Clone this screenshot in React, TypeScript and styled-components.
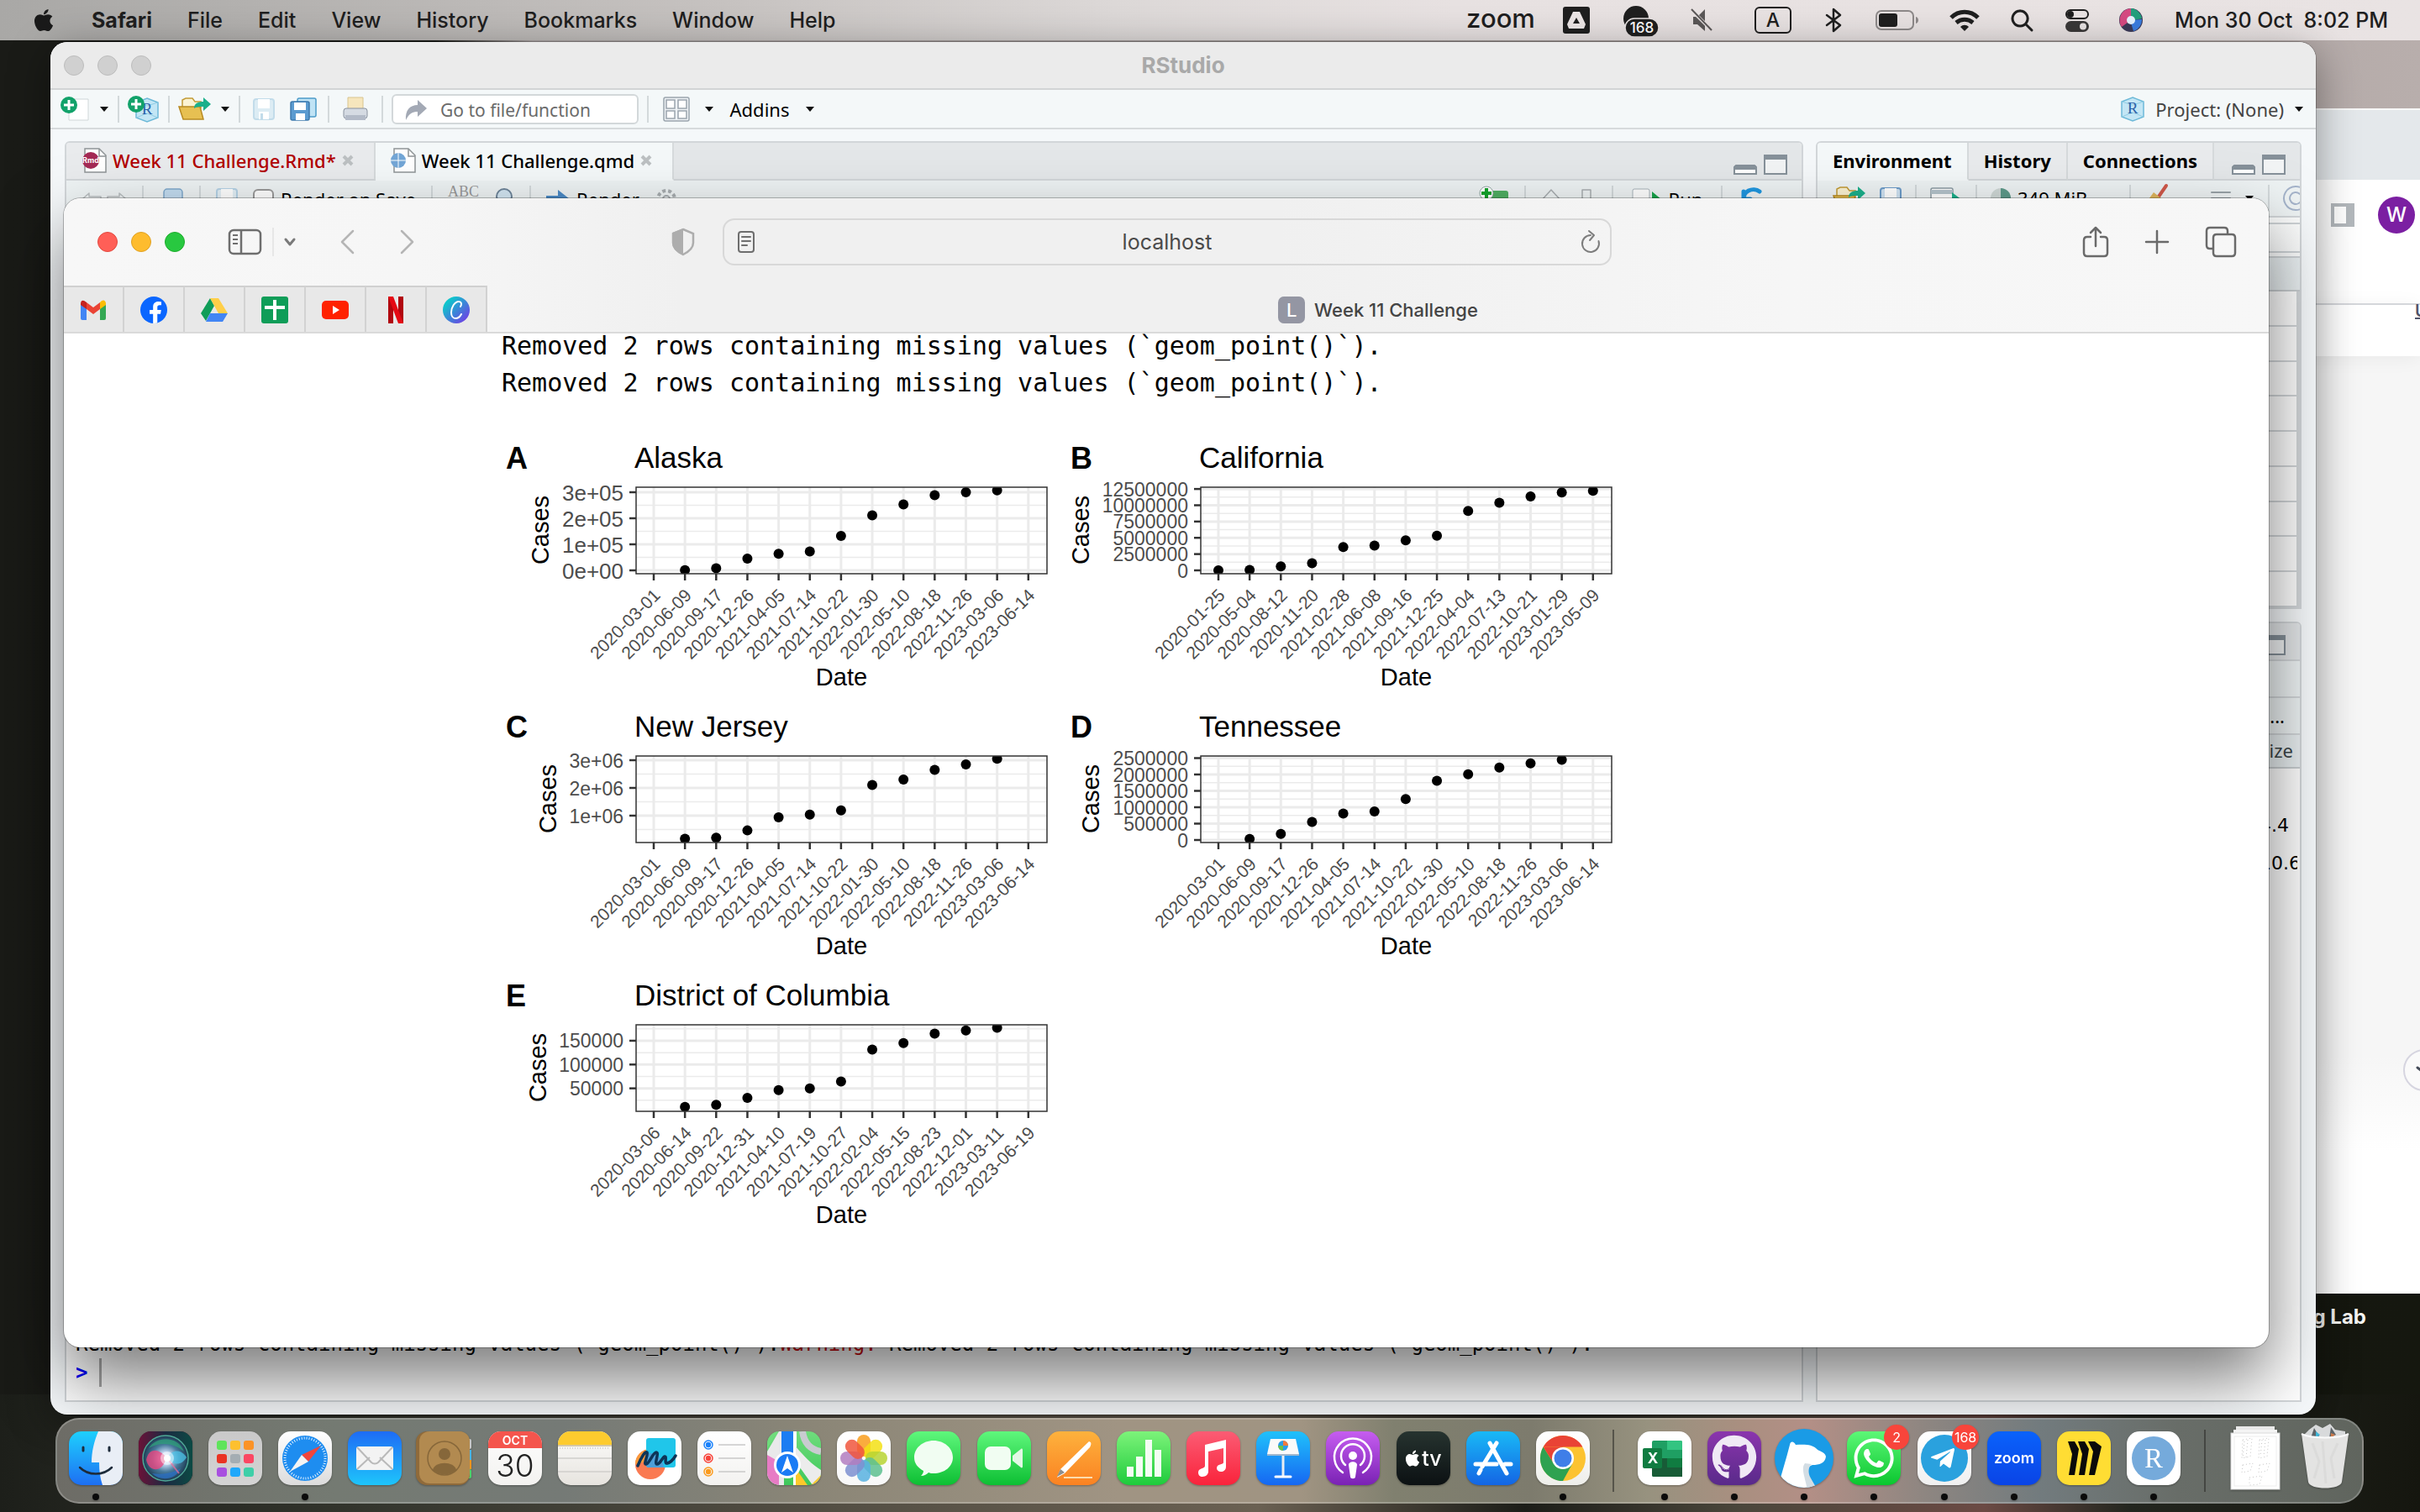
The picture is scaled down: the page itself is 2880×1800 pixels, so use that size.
import React from "react";
import styled, { createGlobalStyle, css } from "styled-components";
import {
  FaApple,
  FaFacebookF,
  FaGithub,
  FaTelegramPlane,
  FaWhatsapp,
} from "react-icons/fa";

const sans = `Inter, "Liberation Sans", sans-serif`;
const ide = `"Noto Sans", "DejaVu Sans", sans-serif`;
const mono = `"DejaVu Sans Mono", monospace`;
const plot = `"Liberation Sans", Arial, sans-serif`;

const GlobalStyle = createGlobalStyle`
  *, *::before, *::after { box-sizing: border-box; }
  body { margin: 0; background: #1a1b17; font-family: ${sans}; }
  button, input { font: inherit; color: inherit; border: 0; padding: 0; margin: 0; background: none; }
  svg { display: block; flex: none; overflow: visible; }
`;

const Desktop = styled.div`
  position: relative;
  display: flex;
  flex-direction: column;
  min-height: 100vh;
  overflow: hidden;
  background:
    linear-gradient(90deg, #1a1b17 18%, #a9a2a2 22%, #9e9694 60%, #b8aeac 100%) top / 100% 160px no-repeat,
    linear-gradient(90deg, #1d1f1a 0%, #33352d 15%, #544f44 35%, #6a6052 52%, #1c1d18 63%, #4b463b 72%, #6b4a44 82%, #23261f 88%, #15160f 100%) bottom / 100% 140px no-repeat,
    linear-gradient(90deg, #1a1b17, #15170f);
`;

/* ---------- Menu bar ---------- */

const MenuBar = styled.header`
  display: flex;
  align-items: center;
  justify-content: space-between;
  height: 48px;
  padding: 0 38px 0 37px;
  font-size: 25px;
  color: #1f1f1f;
  background: linear-gradient(90deg, #a9a8a6 0%, #c6c2c0 30%, #dcd8d7 46%, #e7e1e1 60%, #e9e3e3 100%);
`;

const Menus = styled.nav`
  display: flex;
  align-items: center;
  gap: 42px;
`;

const MenuButton = styled.button<{ $bold?: boolean }>`
  font-weight: ${(p) => (p.$bold ? 700 : 500)};
  white-space: nowrap;
`;

const StatusItems = styled.div`
  display: flex;
  align-items: center;
  gap: 34px;
`;

const Clock = styled.time`
  padding-left: 4px;
  font-weight: 500;
  white-space: pre;
`;

/* ---------- Windows ---------- */

const Stage = styled.main`
  position: relative;
  flex: 1;
`;

const windowFrame = css`
  position: absolute;
  display: flex;
  flex-direction: column;
  overflow: hidden;
`;

const ChromeWindow = styled.section`
  ${windowFrame}
  top: 81px;
  left: 50%;
  right: 0;
  bottom: 148px;
  background: linear-gradient(#f6f6f6 80%, #ffffff 88%);
`;

const ChromeTabs = styled.div`
  height: 85px;
  background: #e4e8eb;
  border-top: 2px solid #f8f8f8;
`;

const ChromeToolbar = styled.div`
  display: flex;
  align-items: center;
  justify-content: flex-end;
  gap: 28px;
  height: 149px;
  padding: 0 6px 64px 0;
  background: #fff;
  border-bottom: 2px solid #dadce0;
`;

const Avatar = styled.button`
  width: 44px;
  height: 44px;
  border-radius: 50%;
  background: #7b1fa2;
  color: #fff;
  font-size: 24px;
  font-weight: 500;
`;

const ChromeStrip = styled.div`
  display: flex;
  justify-content: flex-end;
  height: 61px;
  background: #fff;
  box-shadow: 0 2px 24px rgba(0, 0, 0, 0.06);
`;

const ClippedLink = styled.a`
  width: 6px;
  color: #50546a;
  font-size: 20px;
  line-height: 14px;
  font-weight: 600;
`;

const ScrollDown = styled.button`
  display: grid;
  place-items: center;
  position: absolute;
  right: -30px;
  bottom: 241px;
  width: 50px;
  height: 50px;
  border: 2px solid #d6d5e0;
  border-radius: 50%;
  background: #fafafa;
`;

const DesktopLabel = styled.span`
  position: absolute;
  right: 64px;
  bottom: 104px;
  color: #f4f4f2;
  font-size: 24px;
  line-height: 32px;
  font-weight: 700;
`;

const StudioWindow = styled.section`
  ${windowFrame}
  top: 2px;
  left: 60px;
  right: 124px;
  bottom: 4px;
  border-radius: 20px;
  background: #f5f8fa;
  box-shadow: 0 0 0 1px rgba(0, 0, 0, 0.2), 0 12px 50px rgba(0, 0, 0, 0.4);
  font-family: ${ide};
  font-size: 22px;
`;

const StudioTitle = styled.div`
  display: grid;
  grid-template-columns: 1fr auto 1fr;
  align-items: center;
  height: 57px;
  padding: 0 16px;
  background: #ebebeb;
  border-bottom: 2px solid #d2d4d5;
  color: #a9a9a9;
  font-family: ${sans};
  font-size: 26px;
  font-weight: 700;
`;

const Lights = styled.div`
  display: flex;
  gap: 16px;
`;

const Light = styled.button<{ $fill: string; $line: string }>`
  width: 24px;
  height: 24px;
  border-radius: 50%;
  background: ${(p) => p.$fill};
  border: 1px solid ${(p) => p.$line};
`;

const StudioToolbar = styled.div`
  display: flex;
  align-items: center;
  gap: 10px;
  height: 47px;
  padding: 0 14px 0 12px;
  background: #f4f8f9;
  border-bottom: 2px solid #d6dadc;
`;

const ToolButton = styled.button<{ $width?: number }>`
  display: flex;
  align-items: center;
  justify-content: center;
  gap: 8px;
  min-width: ${(p) => p.$width ?? 12}px;
  white-space: nowrap;
`;

const Divider = styled.span`
  flex: none;
  width: 2px;
  height: 32px;
  background: #d3d9db;
`;

const GoTo = styled.label`
  display: flex;
  align-items: center;
  gap: 16px;
  width: 294px;
  height: 36px;
  padding: 2px 14px 0;
  border: 2px solid #d3d8da;
  border-radius: 6px;
  background: #fff;
  input { width: 100%; outline: 0; font-size: 21px; line-height: 28px; }
  input::placeholder { color: #6b6b6b; opacity: 1; }
`;

const ProjectButton = styled.button`
  display: flex;
  align-items: center;
  gap: 12px;
  margin-left: auto;
  color: #444;
`;

const PaneGrid = styled.div`
  flex: 1;
  display: grid;
  grid-template-columns: minmax(0, 1fr) 578px;
  gap: 15px;
  padding: 14px 17px 15px;
`;

const PaneColumn = styled.div<{ $rows: string }>`
  display: grid;
  grid-template-rows: ${(p) => p.$rows};
  gap: 15px;
  min-width: 0;
`;

const Pane = styled.section`
  display: flex;
  flex-direction: column;
  min-width: 0;
  min-height: 0;
  overflow: hidden;
  border: 2px solid #d2d6d9;
  border-radius: 6px 6px 0 0;
  background: #fff;
`;

const TabStrip = styled.div`
  display: flex;
  height: 45px;
  background: #e4e7e9;
`;

const StudioTab = styled.button<{ $active?: boolean; $panel?: boolean; $color?: string }>`
  display: flex;
  align-items: center;
  gap: 7px;
  padding: ${(p) => (p.$panel ? "0 18px 2px" : "0 24px 2px 18px")};
  border-right: 2px solid #d6dadc;
  border-bottom: 2px solid ${(p) => (p.$active ? "#f4f8f9" : "#d2d6d9")};
  background: ${(p) => (p.$active ? "#f4f8f9" : "#e9ebed")};
  color: ${(p) => p.$color ?? "#000"};
  font-weight: ${(p) => (p.$panel ? 700 : 500)};
  white-space: nowrap;
`;

const StripEnd = styled.div`
  flex: 1;
  display: flex;
  align-items: flex-end;
  justify-content: flex-end;
  gap: 8px;
  padding: 0 17px 5px;
  border-bottom: 2px solid #d2d6d9;
`;

const PaneToolbar = styled.div<{ $height?: number; $flush?: boolean }>`
  display: flex;
  align-items: center;
  gap: ${(p) => (p.$flush ? 16 : 18)}px;
  flex: none;
  height: ${(p) => p.$height ?? 44}px;
  padding: 0 ${(p) => (p.$flush ? 0 : 18)}px 0 18px;
  border-bottom: 2px solid #d2d6d9;
  background: #eef3f4;
`;

const CheckLabel = styled.label`
  display: flex;
  align-items: center;
  gap: 8px;
  color: #000;
  input {
    appearance: none;
    width: 25px;
    height: 25px;
    border: 2px solid #9a9a9a;
    border-radius: 6px;
    background: #fff;
  }
`;

const Spacer = styled.span`
  flex: 1;
`;

const Abc = styled.span`
  align-self: flex-start;
  padding-top: 3px;
  font-family: "Liberation Serif", serif;
  font-size: 18px;
  color: #999;
`;

const Gap = styled.div<{ $height: number }>`
  flex: none;
  height: ${(p) => p.$height}px;
  background: #fbfcfc;
  border-bottom: 2px solid #cdd2d5;
`;

const GridHead = styled.div`
  display: flex;
  align-items: center;
  justify-content: flex-end;
  flex: none;
  height: 40px;
  padding: 0 8px 2px;
  border-bottom: 2px solid #c9ced1;
  background: #e9eff1;
  color: #3c4548;
`;

const GridRow = styled.div`
  flex: 1;
  border-bottom: 2px solid #d2d6d9;
  border-right: 4px solid #d2d6d9;
`;

const FileRow = styled.div`
  padding-left: 526px;
  font-family: "DejaVu Sans", sans-serif;
  line-height: 45px;
  white-space: nowrap;
  overflow: hidden;
`;

const FileList = styled.div`
  padding: 45px 3px 0 0;
`;

const Console = styled.div`
  flex: 1;
  display: flex;
  flex-direction: column;
  justify-content: flex-end;
  padding: 0 11px 16px;
  font-family: ${mono};
  font-size: 24px;
  line-height: 34px;
  white-space: pre;
`;

const Warn = styled.span`
  color: #c5060b;
`;

const Prompt = styled.label`
  display: flex;
  align-items: center;
  color: #0000ff;
  font-weight: 700;
  input { width: 60px; height: 34px; margin-left: 14px; border-left: 3px solid #a9a9a9; outline: 0; }
`;

/* ---------- Browser ---------- */

const BrowserWindow = styled.section`
  ${windowFrame}
  top: 188px;
  left: 76px;
  right: 180px;
  bottom: 84px;
  border-radius: 20px;
  background: #fff;
  box-shadow: 0 0 0 1px rgba(0, 0, 0, 0.25), 0 38px 80px rgba(0, 0, 0, 0.52);
`;

const BrowserHead = styled.div`
  background: linear-gradient(90deg, #f7f7f7 0%, #f6f6f6 16%, #f0f0f0 28%, #f0f0f0 55%, #f6f6f6 78%, #f7f7f7 100%);
  border-bottom: 2px solid #dadada;
`;

const BrowserToolbar = styled.div`
  display: grid;
  grid-template-columns: minmax(0, 1fr) minmax(0, 1058px) minmax(0, 1fr);
  align-items: center;
  gap: 33px;
  height: 104px;
  padding: 0 39px 0 40px;
  color: #6a6a6a;
`;

const ToolGroup = styled.div<{ $end?: boolean; $gap: number }>`
  display: flex;
  align-items: center;
  justify-content: ${(p) => (p.$end ? "flex-end" : "flex-start")};
  gap: ${(p) => p.$gap}px;
`;

const IconButton = styled.button`
  display: grid;
  place-items: center;
`;

const AddressBar = styled.div`
  display: flex;
  align-items: center;
  gap: 12px;
  height: 56px;
  padding: 0 11px 0 16px;
  border: 2px solid #d8d8d8;
  border-radius: 14px;
  input { flex: 1; min-width: 0; outline: 0; color: #4a4a4a; font-size: 25px; text-align: center; }
`;

const TabBar = styled.div`
  display: flex;
  height: 55px;
`;

const PinnedTab = styled.button`
  display: grid;
  place-items: center;
  width: 72px;
  border-right: 2px solid #d2d2d2;
  border-top: 2px solid #d0d0d0;
  background: #e8e8e8;
`;

const ActiveTab = styled.button`
  flex: 1;
  display: flex;
  align-items: center;
  justify-content: center;
  gap: 11px;
  padding-top: 2px;
  color: #444;
  font-size: 22px;
  font-weight: 500;
`;

const Favicon = styled.span`
  display: grid;
  place-items: center;
  width: 32px;
  height: 32px;
  border-radius: 7px;
  background: #9496a3;
  color: #fff;
  font-size: 22px;
`;

const Page = styled.article`
  flex: 1;
  min-height: 0;
  overflow: hidden;
  padding: 0 521px;
`;

const Output = styled.pre`
  margin: -7px 0 0;
  font-family: ${mono};
  font-size: 30px;
  line-height: 44px;
  color: #000;
`;

const Plots = styled.div`
  display: grid;
  grid-template-columns: repeat(2, 672px);
  grid-auto-rows: 320px;
  padding-top: 38px;
`;

const PlotTag = styled.text`
  font: 700 36px ${plot};
`;
const PlotTitle = styled.text`
  font: 35px ${plot};
`;
const AxisTitle = styled.text`
  font: 29px ${plot};
  text-anchor: middle;
`;
const TickText = styled.text<{ $size: number }>`
  font: ${(p) => p.$size}px ${plot};
  fill: #4d4d4d;
  text-anchor: end;
`;

type Chart = {
  tag: string;
  title: string;
  dates: string[];
  first: number;
  cases: number[];
  ticks: [number, string][];
  zero: number;
  unit: number;
  minor: number[];
  titleX: number;
  tickSize: number;
};

const marchDates = [
  "2020-03-01", "2020-06-09", "2020-09-17", "2020-12-26", "2021-04-05", "2021-07-14", "2021-10-22",
  "2022-01-30", "2022-05-10", "2022-08-18", "2022-11-26", "2023-03-06", "2023-06-14",
];

/* zero is the y of zero cases; unit is the pixel height of one million cases. */
const charts: Chart[] = [
  {
    tag: "A", title: "Alaska", dates: marchDates, first: 1,
    cases: [0.0012, 0.0077, 0.0453, 0.0637, 0.0724, 0.1326, 0.2114, 0.2535, 0.289, 0.2997, 0.3072],
    ticks: [[0.3, "3e+05"], [0.2, "2e+05"], [0.1, "1e+05"], [0, "0e+00"]],
    minor: [0.05, 0.15, 0.25], zero: 163, unit: 310, titleX: 56, tickSize: 26,
  },
  {
    tag: "B", title: "California", first: 0,
    dates: [
      "2020-01-25", "2020-05-04", "2020-08-12", "2020-11-20", "2021-02-28", "2021-06-08", "2021-09-16",
      "2021-12-25", "2022-04-04", "2022-07-13", "2022-10-21", "2023-01-29", "2023-05-09",
    ],
    cases: [0, 0.05, 0.6, 1.09, 3.59, 3.8, 4.62, 5.33, 9.13, 10.38, 11.36, 11.96, 12.23],
    ticks: [[12.5, "12500000"], [10, "10000000"], [7.5, "7500000"], [5, "5000000"], [2.5, "2500000"], [0, "0"]],
    minor: [1.25, 3.75, 6.25, 8.75, 11.25], zero: 163, unit: 7.75, titleX: 27, tickSize: 23,
  },
  {
    tag: "C", title: "New Jersey", dates: marchDates, first: 1,
    cases: [0.168, 0.205, 0.466, 0.938, 1.037, 1.186, 2.106, 2.304, 2.652, 2.851, 3.05],
    ticks: [[3, "3e+06"], [2, "2e+06"], [1, "1e+06"]],
    minor: [0.5, 1.5, 2.5], zero: 168, unit: 33, titleX: 65, tickSize: 23,
  },
  {
    tag: "D", title: "Tennessee", dates: marchDates, first: 1,
    cases: [0.032, 0.183, 0.55, 0.808, 0.873, 1.25, 1.81, 2.004, 2.209, 2.338, 2.446],
    ticks: [[2.5, "2500000"], [2, "2000000"], [1.5, "1500000"], [1, "1000000"], [0.5, "500000"], [0, "0"]],
    minor: [0.25, 0.75, 1.25, 1.75, 2.25], zero: 164, unit: 39, titleX: 39, tickSize: 23,
  },
  {
    tag: "E", title: "District of Columbia", first: 1,
    dates: [
      "2020-03-06", "2020-06-14", "2020-09-22", "2020-12-31", "2021-04-10", "2021-07-19", "2021-10-27",
      "2022-02-04", "2022-05-15", "2022-08-23", "2022-12-01", "2023-03-11", "2023-06-19",
    ],
    cases: [0.0112, 0.0155, 0.0299, 0.0464, 0.05, 0.0644, 0.1313, 0.145, 0.1651, 0.1716, 0.1773],
    ticks: [[0.15, "150000"], [0.1, "100000"], [0.05, "50000"]],
    minor: [0.025, 0.075, 0.125, 0.175], zero: 168, unit: 567, titleX: 53, tickSize: 23,
  },
];

function CasesPlot({ chart }: { chart: Chart }) {
  const left = 160, right = 649, top = 64, bottom = 167;
  const x = (i: number) => 181 + i * 37.15;
  const y = (v: number) => chart.zero - v * chart.unit;
  const clip = `panel-${chart.tag}`;
  return (
    <svg width="672" height="320" viewBox="0 0 672 320" role="img" aria-label={`Cases by date, ${chart.title}`}>
      <clipPath id={clip}><rect x={left} y={top} width={right - left} height={bottom - top} /></clipPath>
      <PlotTag x="5" y="42">{chart.tag}</PlotTag>
      <PlotTitle x="158" y="41">{chart.title}</PlotTitle>
      <g clipPath={`url(#${clip})`} stroke="#ebebeb">
        {chart.minor.map((v) => <line key={v} x1={left} x2={right} y1={y(v)} y2={y(v)} strokeWidth="1.5" />)}
        {chart.ticks.map(([v]) => <line key={v} x1={left} x2={right} y1={y(v)} y2={y(v)} strokeWidth="3" />)}
        {chart.dates.map((d, i) => <line key={d} x1={x(i)} x2={x(i)} y1={top} y2={bottom} strokeWidth="3" />)}
        {chart.cases.map((v, i) => <circle key={i} cx={x(i + chart.first)} cy={y(v)} r="6" fill="#000" stroke="none" />)}
      </g>
      <rect x={left} y={top} width={right - left} height={bottom - top} fill="none" stroke="#333" strokeWidth="1.5" />
      {chart.ticks.map(([v, label]) => (
        <g key={label}>
          <line x1={left - 8} x2={left} y1={y(v)} y2={y(v)} stroke="#333" strokeWidth="2.5" />
          <TickText $size={chart.tickSize} x={left - 15} y={y(v) + chart.tickSize * 0.37}>{label}</TickText>
        </g>
      ))}
      {chart.dates.map((d, i) => (
        <g key={d}>
          <line x1={x(i)} x2={x(i)} y1={bottom} y2={bottom + 8} stroke="#333" strokeWidth="2.5" />
          <TickText $size={21} transform={`translate(${x(i) + 9} ${bottom + 27}) rotate(-45)`}>{d}</TickText>
        </g>
      ))}
      <AxisTitle transform={`translate(${chart.titleX} 115) rotate(-90)`}>Cases</AxisTitle>
      <AxisTitle x={(left + right) / 2} y="300">Date</AxisTitle>
    </svg>
  );
}

/* ---------- Dock ---------- */

const DockBar = styled.nav`
  position: relative;
  display: flex;
  align-items: stretch;
  height: 102px;
  margin: 0 67px 10px 66px;
  padding: 0 2px 0 4px;
  border: 2px solid rgba(255, 255, 255, 0.22);
  border-radius: 28px;
  background: linear-gradient(90deg, #6d6c66 0%, #747a72 12%, #757a76 22%, #8b8677 33%, #a09483 46%, #a09482 54%, #80806f 58%, #7d7b6d 64%, #97927f 69%, #a98f80 73%, #b38f86 76%, #8e8681 81%, #727b7e 86%, #686d68 92%, #60655e 100%);
`;

const DockItem = styled.button<{ $running?: boolean }>`
  position: relative;
  flex: 1 1 0;
  display: flex;
  flex-direction: column;
  align-items: center;
  padding-top: 14px;
  filter: drop-shadow(0 1px 1px rgba(0, 0, 0, 0.3));
  &::after {
    content: "";
    width: 8px;
    height: 8px;
    margin-top: 10px;
    border-radius: 50%;
    background: ${(p) => (p.$running ? "#0b0b0b" : "transparent")};
  }
`;

const DockRule = styled.span`
  width: 2px;
  margin: 12px 18px;
  background: rgba(40, 40, 36, 0.55);
`;

const Badge = styled.span`
  position: absolute;
  top: 6px;
  right: 0;
  min-width: 30px;
  height: 30px;
  padding: 0 3px;
  border-radius: 15px;
  background: #f8453b;
  color: #fff;
  font-size: 16px;
  line-height: 30px;
  text-align: center;
`;

const Glyph = styled.text<{ $size: number; $weight?: number; $family?: string }>`
  font-family: ${(p) => p.$family ?? sans};
  font-size: ${(p) => p.$size}px;
  font-weight: ${(p) => p.$weight ?? 400};
  text-anchor: middle;
`;

type TileProps = { id: string; from: string; to: string; children?: React.ReactNode };
const Tile = ({ id, from, to, children }: TileProps) => (
  <svg width="64" height="64" viewBox="0 0 64 64">
    <defs>
      <linearGradient id={`g-${id}`} x1="0" y1="0" x2="0" y2="1">
        <stop offset="0" stopColor={from} /><stop offset="1" stopColor={to} />
      </linearGradient>
      <clipPath id={`c-${id}`}><rect width="64" height="64" rx="15" /></clipPath>
    </defs>
    <rect width="64" height="64" rx="15" fill={`url(#g-${id})`} />
    <g clipPath={`url(#c-${id})`}>{children}</g>
  </svg>
);

const petals = ["#f99d1c", "#f3e014", "#b7d433", "#5dbf8f", "#58b2e0", "#7d8fd0", "#b17cc0", "#f0563d"];
const pads = ["#5fe45b", "#fdc02f", "#fb9326", "#ea3323", "#a4adb3", "#fb4763", "#a850e0", "#1fa8fb", "#3ecfa8"];

const dockApps: { name: string; running?: boolean; badge?: string; rule?: boolean; icon: React.ReactNode }[] = [
  { name: "Finder", running: true, icon: (
    <Tile id="finder" from="#1ed0fd" to="#1e6ff3">
      <path d="M35 0C30 12 27 24 27 37h9c0 10 1 18 4 27h24V0z" fill="#e9eef6" />
      <path d="M17 19v4M48 19v4" stroke="#1d2b3a" strokeWidth="3" strokeLinecap="round" />
      <path d="M13 43c10 10 28 10 38 0" fill="none" stroke="#1d2b3a" strokeWidth="2.5" strokeLinecap="round" />
    </Tile>) },
  { name: "Siri", icon: (
    <Tile id="siri" from="#4b1230" to="#16162e">
      <defs>
        <linearGradient id="siri-side"><stop offset="0" stopColor="#6a1238" /><stop offset=".5" stopColor="#1c2a42" /><stop offset="1" stopColor="#0b4a44" /></linearGradient>
        <radialGradient id="siri-orb"><stop offset="0" stopColor="#fff" /><stop offset=".25" stopColor="#c9dcf5" /><stop offset=".6" stopColor="#477a9c" /><stop offset="1" stopColor="#1d3b52" /></radialGradient>
      </defs>
      <rect width="64" height="64" fill="url(#siri-side)" />
      <circle cx="32" cy="32" r="27" fill="url(#siri-orb)" stroke="#4fa796" strokeWidth="1.500" />
      <path d="M9 34c3-15 15-14 24-3-4 18-20 19-24 3z" fill="#e8467f" opacity=".8" />
      <path d="M34 31c6-10 17-10 23 0-6 10-16 10-23 0z" fill="#4cc3e8" opacity=".75" />
      <path d="M12 20c10-16 36-14 42 4-12-10-28-12-42-4z" fill="#2f9c7c" opacity=".8" />
      <path d="M16 50c10 10 28 8 34-6-10 6-22 8-34 6z" fill="#2c6fc0" opacity=".8" />
      <path d="M34 32L48 50" stroke="#ee6c9b" strokeWidth="2" opacity=".7" />
      <circle cx="34" cy="32" r="8" fill="#fff" opacity=".5" /><circle cx="34" cy="32" r="4" fill="#fff" />
    </Tile>) },
  { name: "Launchpad", icon: (
    <Tile id="pad" from="#c9c9c9" to="#d4d4d4">
      {pads.map((c, i) => <rect key={c} x={10 + (i % 3) * 16} y={11 + Math.floor(i / 3) * 16} width="12" height="11" rx="3" fill={c} />)}
    </Tile>) },
  { name: "Safari", running: true, icon: (
    <Tile id="safari" from="#ffffff" to="#dcdcdc">
      <circle cx="32" cy="32" r="27" fill="#1e8df0" />
      <circle cx="32" cy="32" r="24" fill="none" stroke="#dff0ff" strokeWidth="3" strokeDasharray="1 2" />
      <path d="M51 17L28 28l8 8z" fill="#f2453b" /><path d="M14 48l14-20 8 8z" fill="#f4f4f4" />
    </Tile>) },
  { name: "Mail", icon: (
    <Tile id="mail" from="#1e6cf5" to="#1ec5fb">
      <rect x="10" y="18" width="44" height="28" rx="3" fill="#f3f3f3" />
      <path d="M11 45l15-14M53 45L38 31M11 19l17 18c2 2 6 2 8 0l17-18" fill="none" stroke="#b9b9b9" strokeWidth="2" />
    </Tile>) },
  { name: "Contacts", icon: (
    <svg width="68" height="64" viewBox="0 0 68 64">
      <rect x="58" y="9" width="8" height="12" rx="2" fill="#c8c8c8" /><rect x="58" y="22" width="8" height="12" fill="#49b5ea" />
      <rect x="58" y="34" width="8" height="11" fill="#f6951e" /><rect x="58" y="45" width="8" height="11" rx="2" fill="#4cd269" />
      <rect width="64" height="64" rx="13" fill="#8f6a3a" /><rect x="4" width="60" height="62" rx="12" fill="#b28a50" />
      <circle cx="34" cy="32" r="20" fill="none" stroke="#86673a" strokeWidth="1.500" />
      <circle cx="34" cy="27" r="7" fill="#86673a" /><path d="M20 46c2-11 26-11 28 0-7 7-21 7-28 0z" fill="#86673a" />
    </svg>) },
  { name: "Calendar", icon: (
    <Tile id="cal" from="#fdfdfd" to="#f3f2f0">
      <rect width="64" height="20" fill="#f4554d" />
      <Glyph $size={14} $weight={600} x="32" y="16" fill="#fff">OCT</Glyph>
      <Glyph $size={37} $weight={300} x="32" y="54" fill="#222">30</Glyph>
    </Tile>) },
  { name: "Notes", icon: (
    <Tile id="notes" from="#fcfcfb" to="#e7e4df">
      <rect width="64" height="16" fill="#fdcb2e" /><path d="M0 17h64" stroke="#b39a5a" strokeWidth="1" />
      <path d="M2 20h60" stroke="#b5b5b5" strokeDasharray="1 2" /><path d="M0 32h64M0 48h64" stroke="#d0cecb" strokeWidth="1.500" />
    </Tile>) },
  { name: "Freeform", icon: (
    <Tile id="free" from="#ffffff" to="#ffffff">
      <circle cx="27" cy="39" r="18" fill="#fa7a52" /><path d="M9 39a18 18 0 0 1 18-18v14z" fill="#fb9a3c" />
      <rect x="22" y="8" width="35" height="35" rx="3" fill="#20c6ea" />
      <path d="M22 26a18 18 0 0 1 21 17H25a3 3 0 0 1-3-3z" fill="#4c9fd8" />
      <path d="M12 41c4-10 9-18 11-16s-5 15-1 14 8-14 12-14-3 14 1 14 6-8 9-9-1 9 3 8 7-4 10-9" fill="none" stroke="#0d3557" strokeWidth="3.500" strokeLinecap="round" />
    </Tile>) },
  { name: "Reminders", icon: (
    <Tile id="rem" from="#ffffff" to="#f3f2f0">
      {["#1a82fb", "#f8443a", "#fb9b1e"].map((c, i) => (
        <g key={c}><circle cx="13" cy={16 + i * 16} r="5" fill="none" stroke={c} strokeWidth="1.500" /><circle cx="13" cy={16 + i * 16} r="3.200" fill={c} />
          <path d={`M25 ${16 + i * 16}h32`} stroke="#c9c9c9" strokeWidth="1.500" /></g>))}
    </Tile>) },
  { name: "Maps", icon: (
    <Tile id="maps" from="#6fdc7c" to="#3fc85b">
      <path d="M0 24L14 0h6v64H0z" fill="#e9e9ea" /><path d="M0 0h12L0 20z" fill="#6fdc7c" /><path d="M0 28l14 8v28H0z" fill="#e77cc5" />
      <path d="M17 0h14v40H17z" fill="#1c7df2" /><path d="M31 0h4v64h-4z" fill="#fff" />
      <path d="M34 44l14 20H34z" fill="#fcc92b" /><path d="M34 18c10 12 20 22 30 28v18H54L34 36z" fill="#ececec" />
      <path d="M42 0c2 14 10 22 22 24" fill="none" stroke="#c9cbd0" strokeWidth="8" />
      <path d="M52 64h12V52z" fill="#fcc92b" />
      <circle cx="24" cy="40" r="16" fill="#fff" /><circle cx="24" cy="40" r="13" fill="#1a7bf5" /><path d="M24 29l7 20-7-5-7 5z" fill="#fff" />
    </Tile>) },
  { name: "Photos", icon: (
    <Tile id="photos" from="#ffffff" to="#f8f8f8">
      {petals.map((c, i) => <rect key={c} x="24" y="4" width="16" height="26" rx="8" fill={c} opacity=".85" transform={`rotate(${i * 45} 32 32)`} />)}
    </Tile>) },
  { name: "Messages", icon: (
    <Tile id="msg" from="#5ff77c" to="#0dbf33">
      <path d="M32 11c13 0 23 9 23 20S45 50 32 50c-2 0-4 0-6-1-2 2-5 4-9 4 2-2 3-4 3-6-7-4-11-9-11-16 0-11 10-20 23-20z" fill="#f1fdf2" />
    </Tile>) },
  { name: "FaceTime", icon: (
    <Tile id="ft" from="#5ff77c" to="#0dbf33">
      <rect x="9" y="18" width="31" height="28" rx="7" fill="#f1fdf2" /><path d="M42 29l10-8c1-1 2 0 2 1v20c0 1-1 2-2 1l-10-8z" fill="#e2f8e5" />
    </Tile>) },
  { name: "Pages", icon: (
    <Tile id="pages" from="#fdb23d" to="#fb8222">
      <path d="M50 12c3 1 3 3 1 7L21 50l-9 5 4-10z" fill="#fff" /><path d="M12 54l4-9 5 4z" fill="#8d8d8d" />
      <path d="M20 55h34" stroke="#fddcae" strokeWidth="2" />
    </Tile>) },
  { name: "Numbers", icon: (
    <Tile id="num" from="#7df37a" to="#1ecb3c">
      <path d="M16 42v12M27 30v24M38 10v44M49 22v32" stroke="#f4fdf4" strokeWidth="8" />
    </Tile>) },
  { name: "Music", icon: (
    <Tile id="music" from="#fb5c74" to="#fa233b">
      <path d="M22 16l25-6v32c0 4-3 6-6 6s-5-2-5-4c0-6 8-4 8-7V20l-18 4v24c0 3-3 6-7 6-3 0-5-2-5-5 0-6 8-4 8-8z" fill="#fff" />
    </Tile>) },
  { name: "Keynote", icon: (
    <Tile id="key" from="#20c1fb" to="#1667f2">
      <path d="M17 9h30l4 18H13z" fill="#fafafa" /><path d="M13 27h38v2H13z" fill="#9fb7cd" />
      <circle cx="32" cy="17" r="6" fill="#2a9de8" /><path d="M32 11a6 6 0 0 1 6 6h-6z" fill="#f4793b" /><path d="M32 17h-6a6 6 0 0 0 6 6z" fill="#6dc04b" />
      <path d="M32 29v25" stroke="#e9eef2" strokeWidth="3" /><path d="M23 54h18" stroke="#fff" strokeWidth="3" strokeLinecap="round" />
    </Tile>) },
  { name: "Podcasts", icon: (
    <Tile id="pod" from="#c65df0" to="#7a22b4">
      <circle cx="32" cy="29" r="5" fill="#fff" /><path d="M27 40c0-5 10-5 10 0l-2 14c0 3-6 3-6 0z" fill="#fff" />
      <path d="M23 40a14 14 0 1 1 18 0M20 49a22 22 0 1 1 24 0" fill="none" stroke="#fff" strokeWidth="2.500" strokeLinecap="round" />
    </Tile>) },
  { name: "TV", icon: (
    <Tile id="tv" from="#26332f" to="#0c1113">
      <FaApple x="8" y="21" size={22} color="#fff" /><Glyph $size={25} $weight={500} x="42" y="41" fill="#fff">tv</Glyph>
    </Tile>) },
  { name: "App Store", icon: (
    <Tile id="store" from="#19b9f6" to="#1465e4">
      <path d="M36 14L19 42M28 14l20 36M11 39h25M46 39h7M17 46l-2 4" stroke="#fff" strokeWidth="5" strokeLinecap="round" />
    </Tile>) },
  { name: "Chrome", running: true, icon: (
    <Tile id="chrome" from="#ffffff" to="#eeeeea">
      <circle cx="32" cy="32" r="27" fill="#fcc331" /><path d="M8.600 18.500A27 27 0 0 1 55.400 18.500H32z" fill="#e94335" />
      <path d="M8.600 18.500A27 27 0 0 0 32 59l11-20-22-1z" fill="#2ea251" /><path d="M8.600 18.500L21 38l11-19.500z" fill="#e94335" />
      <circle cx="32" cy="32" r="13" fill="#fff" /><circle cx="32" cy="32" r="10.500" fill="#3f7ee8" />
    </Tile>) },
  { name: "Excel", running: true, rule: true, icon: (
    <Tile id="excel" from="#ffffff" to="#ffffff">
      <rect x="17" y="11" width="36" height="43" rx="2" fill="#1f9f63" /><path d="M35 11h16a2 2 0 0 1 2 2v9H35z" fill="#33c481" />
      <path d="M17 32h18v22H19a2 2 0 0 1-2-2z" fill="#185c37" /><path d="M35 32h18v11H35z" fill="#107c41" /><path d="M30 43h23v11H30z" fill="#185c37" />
      <rect x="6" y="20" width="23" height="24" rx="2" fill="#107c41" /><Glyph $size={17} $weight={700} x="18" y="38" fill="#fff">X</Glyph>
    </Tile>) },
  { name: "GitHub Desktop", running: true, icon: (
    <Tile id="gh" from="#8b35ad" to="#592a8a"><FaGithub x="5" y="4" size={54} color="#f0e9f5" /></Tile>) },
  { name: "Paw", running: true, icon: (
    <svg width="64" height="64" viewBox="0 0 64 64">
      <clipPath id="paw-disc"><circle cx="32" cy="32" r="35" /></clipPath>
      <circle cx="32" cy="32" r="35" fill="#1a9be6" />
      <g clipPath="url(#paw-disc)">
        <path d="M0 70c4-16 10-34 15-54 1-5 5-4 7 0 12-1 20 0 24 4 3 4 11 4 12 10-1 8-8 10-16 10-5 1-7 8-4 14l10 16z" fill="#fff" />
        <path d="M33 38c-5 6 0 16 3 32h12l-9-16c-3-7-1-13 2-15z" fill="#d3dde4" />
      </g>
    </svg>) },
  { name: "WhatsApp", running: true, badge: "2", icon: (
    <Tile id="wa" from="#5df777" to="#0ac62f"><FaWhatsapp x="5" y="5" size={54} color="#fff" /></Tile>) },
  { name: "Telegram", running: true, badge: "168", icon: (
    <Tile id="tg" from="#ffffff" to="#f0f0f0"><circle cx="32" cy="32" r="28" fill="#2aa1de" /><FaTelegramPlane x="14" y="16" size={32} color="#fff" /></Tile>) },
  { name: "Zoom", running: true, icon: (
    <Tile id="zoom" from="#0a62fb" to="#0a44e6"><Glyph $size={18} $weight={600} x="32" y="38" fill="#fff">zoom</Glyph></Tile>) },
  { name: "Miro", running: true, icon: (
    <Tile id="miro" from="#ffdd33" to="#ffdd33">
      <path d="M13 12h8l5 9-5 31h-7l4-25zM25 12h8l5 9-5 31h-7l4-25zM37 12h8l8 6-8 34h-7l5-28z" fill="#0a0a0a" />
    </Tile>) },
  { name: "RStudio", running: true, icon: (
    <Tile id="rs" from="#ffffff" to="#ffffff">
      <circle cx="32" cy="32" r="26" fill="#75aadb" /><Glyph $size={33} $family={`"Liberation Serif", serif`} x="32" y="43" fill="#fff">R</Glyph>
    </Tile>) },
  { name: "Document", rule: true, icon: (
    <svg width="58" height="64" viewBox="0 0 58 64">
      <rect x="6" y="-6" width="46" height="74" fill="#e9e9e9" /><rect x="3" y="-2" width="52" height="70" fill="#f4f4f4" />
      <rect y="2" width="58" height="67" fill="#fff" stroke="#d9d9d9" /><rect x="4" y="6" width="50" height="59" fill="none" stroke="#eee" />
      <g fill="none" stroke="#c6c6c6" strokeDasharray="1 3">
        <path d="M14 10l11-2-2 22-10 2zM16 12l-2 20M20 10l-2 22M34 10l11-2-2 22-10 2zM37 10l-2 20M41 10l-2 20" />
        <path d="M14 40l12-2-3 9-10 2zM34 40l12-2-3 9-10 2zM22 55l15-2-3 10-12 1z" />
      </g>
    </svg>) },
  { name: "Trash", icon: (
    <svg width="58" height="64" viewBox="0 0 58 64">
      <path d="M4 4l6-6 8-6 8 4 9-5 6 7 12 2v8H4z" fill="#d8dadb" /><path d="M16-4l6 10-10 2zM36-5l6 9-8 4z" fill="#5e6468" /><path d="M18 0l5 4-5 4z" fill="#3fb6d8" /><path d="M36 2l5 2-5 4z" fill="#cc7a4b" />
      <path d="M1 3c12 6 44 6 56 0L49 60c-1 10-39 10-40 0z" fill="#e3e3e2" /><path d="M1 3c12 6 44 6 56 0" fill="none" stroke="#fafafa" strokeWidth="2" />
      <path d="M14 14l8 22-6 20M44 14l-8 18 4 24M26 12l4 50" fill="none" stroke="#dbdbda" strokeWidth="3" />
    </svg>) },
];

/* ---------- Small icons ---------- */

const Caret = () => <svg width="12" height="6" viewBox="0 0 12 6"><path d="M1 0h10L6 6z" fill="#111" /></svg>;

const Cube = () => (
  <svg width="30" height="30" viewBox="0 0 30 30">
    <path d="M15 1l13 5v18l-13 5-13-5V6z" fill="#c3e6f5" stroke="#6db9d8" strokeWidth="1.500" />
    <path d="M2 6l13 4 13-4M2 24l13-5 13 5" fill="none" stroke="#8fcde4" />
    <Glyph $size={19} $family={`"Liberation Serif", serif`} x="15" y="20" fill="#2b62a8">R</Glyph>
  </svg>
);

const Plus = () => (
  <><circle cx="10" cy="10" r="10" fill="#12a26a" /><path d="M10 4v12M4 10h12" stroke="#fff" strokeWidth="3" /></>
);

const Disk = ({ color, fill }: { color: string; fill: string }) => (
  <svg width="26" height="26" viewBox="0 0 26 26">
    <rect x="1" y="1" width="24" height="24" rx="3" fill={fill} stroke={color} strokeWidth="2" />
    <path d="M6 1h14v11H6z" fill="#fff" /><path d="M7 16h12v9H7z" fill="#fff" /><path d="M9 18h3v7H9z" fill={color} />
  </svg>
);

const Folder = () => (
  <svg width="40" height="30" viewBox="0 0 40 30">
    <path d="M5 14V4l4-2h8l3 4h7v8" fill="#fbf3d2" stroke="#c29b36" strokeWidth="1.500" />
    <path d="M1 12h25l4 15H6z" fill="#e7c052" stroke="#b88a22" strokeWidth="1.500" />
    <path d="M19 14c0-6 5-8 11-8V1l9 8-9 8v-5c-5 0-8 0-11 2z" fill="#1bb08b" />
  </svg>
);

const PaneSize = () => (
  <>
    <IconButton aria-label="Minimize pane"><svg width="28" height="12" viewBox="0 0 28 12"><path d="M1 11V3l2-2h22l2 2v8z" fill="#fff" stroke="#86919a" strokeWidth="2" /><path d="M1 1h26v5H1z" fill="#86919a" /></svg></IconButton>
    <IconButton aria-label="Maximize pane"><svg width="28" height="24" viewBox="0 0 28 24"><path d="M1 1h26v22H1z" fill="#f2f4f5" stroke="#86919a" strokeWidth="2" /><path d="M1 0h26v6H1z" fill="#86919a" /></svg></IconButton>
  </>
);

const TabDoc = ({ children }: { children: React.ReactNode }) => (
  <svg width="30" height="30" viewBox="0 0 30 30"><path d="M4 1h17l8 8v20H4z" fill="#fff" stroke="#8f9496" strokeWidth="1.500" /><path d="M21 1v9h8" fill="none" stroke="#8f9496" strokeWidth="1.500" />{children}</svg>
);

const CloseX = () => <svg width="14" height="14" viewBox="0 0 14 14"><path d="M2 2l10 10M12 2L2 12" stroke="#bcc0c2" strokeWidth="4" /></svg>;

const Stroke = ({ w, h, d, width = 2.5, color = "currentColor" }: { w: number; h: number; d: string; width?: number; color?: string }) => (
  <svg width={w} height={h} viewBox={`0 0 ${w} ${h}`} fill="none" stroke={color} strokeWidth={width} strokeLinecap="round" strokeLinejoin="round"><path d={d} /></svg>
);

const pinned: { name: string; icon: React.ReactNode }[] = [
  { name: "Gmail", icon: (
    <svg width="30" height="24" viewBox="0 0 30 24"><path d="M0 4v18q0 2 2 2h5V10z" fill="#4285f4" /><path d="M30 4v18q0 2-2 2h-5V10z" fill="#34a853" /><path d="M23 3v8l7-5V4q-1-5-5-3z" fill="#fbbc04" /><path d="M7 3v8l8 6 8-6V3l-8 6z" fill="#ea4335" /><path d="M0 6l7 5V3Q1-2 0 4z" fill="#c5221f" /></svg>) },
  { name: "Facebook", icon: (
    <svg width="32" height="32" viewBox="0 0 32 32"><clipPath id="fbc"><circle cx="16" cy="16" r="16" /></clipPath><circle cx="16" cy="16" r="16" fill="#0a66ff" /><g clipPath="url(#fbc)"><FaFacebookF x="5" y="6" size={26} color="#fff" /></g></svg>) },
  { name: "Drive", icon: (
    <svg width="32" height="28" viewBox="0 0 32 28"><path d="M11 0l5 9L6 27 0 18z" fill="#0f9d58" /><path d="M11 0h10l11 18H21z" fill="#ffcf48" /><path d="M11 18h21l-6 10H6z" fill="#4285f4" /></svg>) },
  { name: "Sheets", icon: (
    <svg width="32" height="32" viewBox="0 0 32 32"><rect width="32" height="32" rx="3" fill="#0f9d58" /><path d="M16 4v24M4 13h24" stroke="#fff" strokeWidth="4" /></svg>) },
  { name: "YouTube", icon: (
    <svg width="32" height="22" viewBox="0 0 32 22"><rect width="32" height="22" rx="5" fill="#f20" /><path d="M13 6l8 5-8 5z" fill="#fff" /></svg>) },
  { name: "Netflix", icon: (
    <svg width="18" height="32" viewBox="0 0 18 32"><path d="M0 0h6v32H0zM12 0h6v32h-6z" fill="#b1060f" /><path d="M0 0h6l12 32h-6z" fill="#e50914" /></svg>) },
  { name: "Canva", icon: (
    <svg width="32" height="32" viewBox="0 0 32 32"><defs><linearGradient id="cv" x1="0" y1="0" x2="1" y2="1"><stop offset="0.200" stopColor="#0fc4cc" /><stop offset="1" stopColor="#7d2ae8" /></linearGradient></defs><circle cx="16" cy="16" r="16" fill="url(#cv)" /><path d="M21 12c2-3 1-6-2-6-5 0-9 7-9 13 0 4 2 7 5 7 4 0 6-3 7-5" fill="none" stroke="#fff" strokeWidth="2" strokeLinecap="round" /></svg>) },
];

const removed = "Removed 2 rows containing missing values (`geom_point()`).";

function MacMenuBar() {
  return (
    <MenuBar>
      <Menus>
        <IconButton aria-label="Apple menu"><FaApple size={30} color="#1a1a1a" /></IconButton>
        {["Safari", "File", "Edit", "View", "History", "Bookmarks", "Window", "Help"].map((m, i) => (
          <MenuButton key={m} $bold={i === 0}>{m}</MenuButton>
        ))}
      </Menus>
      <StatusItems>
        <svg width="80" height="30" viewBox="0 0 80 30"><Glyph $size={31} $weight={500} x="40" y="24" fill="#1f1f1f">zoom</Glyph></svg>
        <svg width="38" height="32" viewBox="0 0 38 32"><rect width="32" height="32" rx="3" fill="#1f1f1f" /><path d="M12 6h8l7 15-2 5H7l-2-5z" fill="#ece6e6" /><path d="M16 13l4 7h-8z" fill="#1f1f1f" /></svg>
        <svg width="44" height="40" viewBox="0 0 44 40"><circle cx="15" cy="18" r="15" fill="#1f1f1f" /><rect x="2" y="18" width="40" height="22" rx="11" fill="#1f1f1f" stroke="#e8e2e2" strokeWidth="1.500" /><Glyph $size={17} $weight={500} x="22" y="35" fill="#fff">168</Glyph></svg>
        <svg width="44" height="28" viewBox="0 0 44 28"><path d="M5 10h5l9-9v26l-9-8H5z" fill="#5a5757" /><path d="M3 2l24 24" stroke="#e8e2e2" strokeWidth="4" /><path d="M3 1l24 25" stroke="#5a5757" strokeWidth="2" /></svg>
        <svg width="44" height="32" viewBox="0 0 44 32"><rect x="1" y="1" width="42" height="30" rx="5" fill="none" stroke="#1f1f1f" strokeWidth="2" /><Glyph $size={23} $weight={500} x="22" y="24" fill="#1f1f1f">A</Glyph></svg>
        <Stroke w={32} h={28} d="M8 8l16 12-8 7V1l8 7L8 20" width={2.5} color="#1f1f1f" />
        <svg width="54" height="24" viewBox="0 0 54 24"><rect x="1" y="1" width="44" height="22" rx="6" fill="none" stroke="#8d8989" strokeWidth="2" /><rect x="4" y="4" width="22" height="16" rx="3" fill="#1f1f1f" /><path d="M48 8c4 1 4 7 0 8z" fill="#8d8989" /></svg>
        <svg width="36" height="26" viewBox="0 0 36 26" fill="none" stroke="#1f1f1f" strokeWidth="5"><path d="M2 10c9-9 23-9 32 0M8 16c6-5 14-5 20 0" /><path d="M18 26l-5-5c3-3 7-3 10 0z" fill="#1f1f1f" stroke="none" /></svg>
        <Stroke w={32} h={28} d="M14 3a9 9 0 1 0 .1 0M21 19l7 7" width={3} color="#1f1f1f" />
        <svg width="32" height="28" viewBox="0 0 32 28"><rect x="3" y="2" width="26" height="10" rx="5" fill="none" stroke="#1f1f1f" strokeWidth="2" /><circle cx="8" cy="7" r="4" fill="#1f1f1f" /><rect x="2" y="15" width="28" height="13" rx="6.500" fill="#3a3838" /><circle cx="23" cy="21.500" r="4" fill="#e8e2e2" /></svg>
        <svg width="28" height="28" viewBox="0 0 28 28"><circle cx="14" cy="14" r="14" fill="#3b3a58" /><path d="M2 8a14 14 0 0 1 12-8v14L3 22C0 18 0 12 2 8z" fill="#d64a82" /><path d="M14 0a14 14 0 0 1 13 12l-13 3z" fill="#22a07c" /><path d="M27 13a14 14 0 0 1-10 14l-4-13z" fill="#3a7de0" /><circle cx="14" cy="14" r="5" fill="#e6f4ff" /></svg>
        <Clock>{"Mon 30 Oct  8:02 PM"}</Clock>
      </StatusItems>
    </MenuBar>
  );
}

function Studio() {
  return (
    <StudioWindow>
      <StudioTitle>
        <Lights>{[0, 1, 2].map((i) => <Light key={i} $fill="#d0d0d0" $line="#bcbcbc" aria-label="Window control" />)}</Lights>
        <span>RStudio</span>
      </StudioTitle>
      <StudioToolbar>
        <ToolButton $width={36} aria-label="New file"><svg width="36" height="30" viewBox="0 0 36 30"><path d="M10 3h23v25H10z" fill="#fff" stroke="#cfd6d8" /><Plus /></svg></ToolButton>
        <ToolButton aria-label="New file menu"><Caret /></ToolButton>
        <Divider />
        <ToolButton $width={38} aria-label="New project"><svg width="38" height="32" viewBox="0 0 38 32"><svg x="8" y="2" width="30" height="30"><Cube /></svg><Plus /></svg></ToolButton>
        <Divider />
        <ToolButton $width={40} aria-label="Open file"><Folder /></ToolButton>
        <ToolButton aria-label="Recent files"><Caret /></ToolButton>
        <Divider />
        <ToolButton $width={36} aria-label="Save"><Disk color="#c2dcea" fill="#dcecf4" /></ToolButton>
        <ToolButton $width={38} aria-label="Save all"><svg width="32" height="28" viewBox="0 0 32 28"><rect x="9" y="1" width="22" height="22" rx="2" fill="#bfe3f5" stroke="#4d9cc9" strokeWidth="1.500" /><rect x="1" y="5" width="22" height="22" rx="2" fill="#5b9bd0" stroke="#3c79ad" strokeWidth="1.500" /><path d="M5 6h14v9H5zM7 19h11v8H7z" fill="#fff" /></svg></ToolButton>
        <Divider />
        <ToolButton $width={42} aria-label="Print"><svg width="30" height="30" viewBox="0 0 30 30"><path d="M6 1h18v15H6z" fill="#f6e6bd" stroke="#d8c48e" /><rect x="1" y="14" width="28" height="12" rx="3" fill="#d5dbe3" stroke="#8a93a0" /><path d="M3 22h24v6H3z" fill="#b3bbc8" /></svg></ToolButton>
        <Divider />
        <GoTo><svg width="26" height="24" viewBox="0 0 26 24"><path d="M1 24C0 12 6 6 15 6V0l11 10-11 10v-6c-6 0-10 2-14 10z" fill="#a3a9b5" /></svg><input aria-label="Go to file or function" placeholder="Go to file/function" /></GoTo>
        <Divider />
        <ToolButton $width={46} aria-label="Panes layout"><svg width="32" height="30" viewBox="0 0 32 30" fill="#fff" stroke="#9aa4ad" strokeWidth="1.500"><rect x="1" y="1" width="30" height="28" rx="2" fill="#eef2f5" /><rect x="4" y="4" width="10" height="10" /><rect x="18" y="4" width="10" height="10" /><rect x="4" y="17" width="10" height="9" /><rect x="18" y="17" width="10" height="9" /></svg></ToolButton>
        <ToolButton aria-label="Panes menu"><Caret /></ToolButton>
        <ToolButton $width={88}>Addins</ToolButton>
        <ToolButton aria-label="Addins menu"><Caret /></ToolButton>
        <ProjectButton><Cube />Project: (None)<Caret /></ProjectButton>
      </StudioToolbar>
      <PaneGrid>
        <PaneColumn $rows="minmax(0, 1fr) minmax(0, 1fr)">
          <Pane>
            <TabStrip>
              <StudioTab $color="#b20000"><TabDoc><circle cx="11" cy="15" r="10" fill="#a42a55" /><Glyph $size={9} $weight={700} x="11" y="18" fill="#fff">Rmd</Glyph></TabDoc>Week 11 Challenge.Rmd*<CloseX /></StudioTab>
              <StudioTab $active><TabDoc><circle cx="9" cy="15" r="9" fill="#73a6d6" /><path d="M9 6v18M0 15h18" stroke="#fff" /></TabDoc>Week 11 Challenge.qmd<CloseX /></StudioTab>
              <StripEnd><PaneSize /></StripEnd>
            </TabStrip>
            <PaneToolbar $height={46}>
              <Stroke w={54} h={16} d="M1 8l8-7v4h14v6H9v4zM53 8l-8-7v4H31v6h14v4z" width={1.5} color="#b9bec0" />
              <Divider />
              <svg width="30" height="26" viewBox="0 0 30 26"><rect x="6" y="1" width="22" height="20" rx="4" fill="#c3dcf0" stroke="#7fa9cc" strokeWidth="1.500" /></svg>
              <Divider />
              <Disk color="#b5d2e6" fill="#e3eff6" />
              <CheckLabel><input type="checkbox" />Render on Save</CheckLabel>
              <Divider />
              <Abc>ABC</Abc>
              <svg width="24" height="28" viewBox="0 0 24 28"><circle cx="12" cy="11" r="9" fill="#d3e6f3" stroke="#6d8499" strokeWidth="2" /></svg>
              <Divider />
              <ToolButton><svg width="28" height="22" viewBox="0 0 28 22"><path d="M0 7h14V0l14 11-14 11v-7H0z" fill="#4b8ac6" /></svg>Render</ToolButton>
              <svg width="28" height="28" viewBox="0 0 28 28"><circle cx="14" cy="14" r="10" fill="none" stroke="#a8adb0" strokeWidth="4" strokeDasharray="4 3" /><circle cx="14" cy="14" r="4" fill="none" stroke="#a8adb0" strokeWidth="2" /></svg>
              <Spacer />
              <svg width="36" height="32" viewBox="0 0 36 32"><rect x="14" y="6" width="21" height="20" rx="3" fill="#4fae62" /><circle cx="9" cy="9" r="8" fill="#fff" stroke="#9aa" /><path d="M9 3v12M3 9h12" stroke="#14a32c" strokeWidth="4" /></svg>
              <Divider />
              <Stroke w={24} h={24} d="M12 1l11 12h-6v10H7V13H1z" width={1.5} color="#a9aeb1" />
              <Stroke w={24} h={24} d="M7 1h10v11h6L12 23 1 12h6z" width={1.5} color="#a9aeb1" />
              <Divider />
              <ToolButton $width={92}><svg width="36" height="26" viewBox="0 0 36 26"><rect x="1" y="1" width="20" height="24" rx="2" fill="#fff" stroke="#a9b4bb" /><path d="M2 14h12" stroke="#7fb0dc" strokeWidth="4" /><path d="M14 12h10V4l12 10-12 10v-7H14z" fill="#17a34a" /></svg>Run</ToolButton>
              <Divider />
              <Stroke w={58} h={26} d="M8 13a11 9 0 0 1 18-9M7 4v9h8" width={5} color="#1f97e0" />
            </PaneToolbar>
          </Pane>
          <Pane>
            <Console>
              <span>{removed}<Warn>Warning:</Warn> {removed}</span>
              <Prompt>&gt;<input aria-label="Console input" /></Prompt>
            </Console>
          </Pane>
        </PaneColumn>
        <PaneColumn $rows="minmax(0, 557fr) minmax(0, 929fr)">
          <Pane>
            <TabStrip>
              <StudioTab $active $panel>Environment</StudioTab>
              <StudioTab $panel>History</StudioTab>
              <StudioTab $panel>Connections</StudioTab>
              <StripEnd><PaneSize /></StripEnd>
            </TabStrip>
            <PaneToolbar $flush>
              <Folder />
              <Disk color="#6d9cc9" fill="#cfe2f2" />
              <Divider />
              <svg width="38" height="26" viewBox="0 0 38 26"><rect x="1" y="1" width="26" height="24" rx="2" fill="#fff" stroke="#8b9aa3" strokeWidth="1.500" /><path d="M1 3h26v5H1z" fill="#b5c3cb" /><path d="M16 14h10V6l12 9-12 9v-6H16z" fill="#1bb08b" /></svg>
              <Divider />
              <ToolButton><svg width="24" height="24" viewBox="0 0 24 24"><circle cx="12" cy="12" r="12" fill="#cfd8d6" /><path d="M12 0a12 12 0 0 1 0 24z" fill="#5d9a8a" /></svg>349 MiB</ToolButton>
              <Spacer />
              <Divider />
              <svg width="30" height="36" viewBox="0 0 30 36"><path d="M26 3l-9 13" stroke="#d0584a" strokeWidth="4" strokeLinecap="round" /><path d="M11 11l9 7-6 14-14-6z" fill="#dfb65c" /></svg>
              <Spacer />
              <Stroke w={24} h={18} d="M1 2h22M1 9h22M1 16h22" width={2} color="#9aa3a8" />
              <Caret />
              <Divider />
              <Stroke w={20} h={30} d="M15 1a14 14 0 1 0 .1 0M20 10a7 7 0 1 0 2 6" width={2} color="#a5b4cb" />
            </PaneToolbar>
            <Gap $height={8} />
            <Gap $height={34} />
            <Gap $height={6} />
            <GridHead />
            {Array.from({ length: 9 }, (_, i) => <GridRow key={i} />)}
          </Pane>
          <Pane>
            <TabStrip><StripEnd><PaneSize /></StripEnd></TabStrip>
            <PaneToolbar />
            <PaneToolbar><Spacer />...</PaneToolbar>
            <GridHead>Size</GridHead>
            <FileList>
              <FileRow>4.4</FileRow>
              <FileRow>10.6</FileRow>
            </FileList>
          </Pane>
        </PaneColumn>
      </PaneGrid>
    </StudioWindow>
  );
}

function Browser() {
  return (
    <BrowserWindow>
      <BrowserHead>
        <BrowserToolbar>
          <ToolGroup $gap={52}>
            <Lights>
              <Light $fill="#ff5f57" $line="#e2493f" aria-label="Close" />
              <Light $fill="#febc2e" $line="#e0a123" aria-label="Minimize" />
              <Light $fill="#28c840" $line="#1dad2b" aria-label="Zoom" />
            </Lights>
            <ToolGroup $gap={12}>
              <IconButton aria-label="Sidebar"><svg width="54" height="36" viewBox="0 0 54 36" fill="none" stroke="#6e6e6e" strokeWidth="2.500"><rect x="1" y="4" width="37" height="28" rx="5" /><path d="M15 4v28" /><path d="M5 10h6M5 15h6M5 20h6" strokeWidth="2" /><path d="M53 1v34" stroke="#e2e2e2" strokeWidth="1.500" /></svg></IconButton>
              <IconButton aria-label="Tab groups"><Stroke w={14} h={8} d="M2 1l5 6 5-6" width={3} color="#7a7a7a" /></IconButton>
            </ToolGroup>
            <ToolGroup $gap={54}>
              <IconButton aria-label="Back"><Stroke w={18} h={30} d="M16 2L3 15l13 13" color="#b5b5b5" /></IconButton>
              <IconButton aria-label="Forward"><Stroke w={18} h={30} d="M2 2l13 13L2 28" color="#b5b5b5" /></IconButton>
            </ToolGroup>
            <Spacer />
            <IconButton aria-label="Privacy report"><svg width="28" height="34" viewBox="0 0 28 34"><path d="M14 2l12 5v11c0 7-6 11-12 14C8 29 2 25 2 18V7z" fill="none" stroke="#adadad" strokeWidth="2.500" /><path d="M14 1v32C7 30 1 25 1 18V6z" fill="#adadad" /></svg></IconButton>
          </ToolGroup>
          <AddressBar>
            <IconButton aria-label="Reader"><Stroke w={20} h={26} d="M4 1h12q3 0 3 3v18q0 3-3 3H4q-3 0-3-3V4q0-3 3-3zM5 7h10M5 12h10M5 17h6" width={2} color="#6e6e6e" /></IconButton>
            <input aria-label="Address" defaultValue="localhost" />
            <IconButton aria-label="Reload"><Stroke w={24} h={28} d="M12 6a10 10 0 1 0 9.500 7M10 1l6 5-5 6" width={2} color="#7d7d7d" /></IconButton>
          </AddressBar>
          <ToolGroup $end $gap={44}>
            <IconButton aria-label="Share"><Stroke w={30} h={38} d="M9 13H5q-4 0-4 4v15q0 4 4 4h20q4 0 4-4V17q0-4-4-4h-4M15 24V2M9 8l6-6 6 6" /></IconButton>
            <IconButton aria-label="New tab"><Stroke w={28} h={28} d="M14 1v26M1 14h26" /></IconButton>
            <IconButton aria-label="Tab overview"><Stroke w={36} h={36} d="M13 9h18q4 0 4 4v18q0 4-4 4H13q-4 0-4-4V13q0-4 4-4zM9 26H5q-4 0-4-4V5q0-4 4-4h17q4 0 4 4v4" /></IconButton>
          </ToolGroup>
        </BrowserToolbar>
        <TabBar>
          {pinned.map((p) => <PinnedTab key={p.name} aria-label={p.name}>{p.icon}</PinnedTab>)}
          <ActiveTab><Favicon>L</Favicon>Week 11 Challenge</ActiveTab>
        </TabBar>
      </BrowserHead>
      <Page>
        <Output>{removed + "\n" + removed}</Output>
        <Plots>{charts.map((c) => <CasesPlot key={c.tag} chart={c} />)}</Plots>
      </Page>
    </BrowserWindow>
  );
}

export default function App() {
  return (
    <Desktop>
      <GlobalStyle />
      <MacMenuBar />
      <Stage>
        <DesktopLabel>Reading Lab</DesktopLabel>
        <ChromeWindow>
          <ChromeTabs />
          <ChromeToolbar>
            <IconButton aria-label="Side panel"><svg width="28" height="28" viewBox="0 0 28 28"><path d="M0 0h28v28H0z" fill="#b3b8bc" /><path d="M4 4h14v20H4z" fill="#fff" /></svg></IconButton>
            <Avatar>W</Avatar>
          </ChromeToolbar>
          <ChromeStrip><ClippedLink href="#">U</ClippedLink></ChromeStrip>
          <ScrollDown aria-label="Scroll down"><Stroke w={20} h={10} d="M2 2l8 6 8-6" width={3} color="#444b58" /></ScrollDown>
        </ChromeWindow>
        <Studio />
        <Browser />
      </Stage>
      <DockBar aria-label="Dock">
        {dockApps.map((a) => (
          <React.Fragment key={a.name}>
            {a.rule && <DockRule />}
            <DockItem $running={a.running} aria-label={a.name}>{a.icon}{a.badge && <Badge>{a.badge}</Badge>}</DockItem>
          </React.Fragment>
        ))}
      </DockBar>
    </Desktop>
  );
}
